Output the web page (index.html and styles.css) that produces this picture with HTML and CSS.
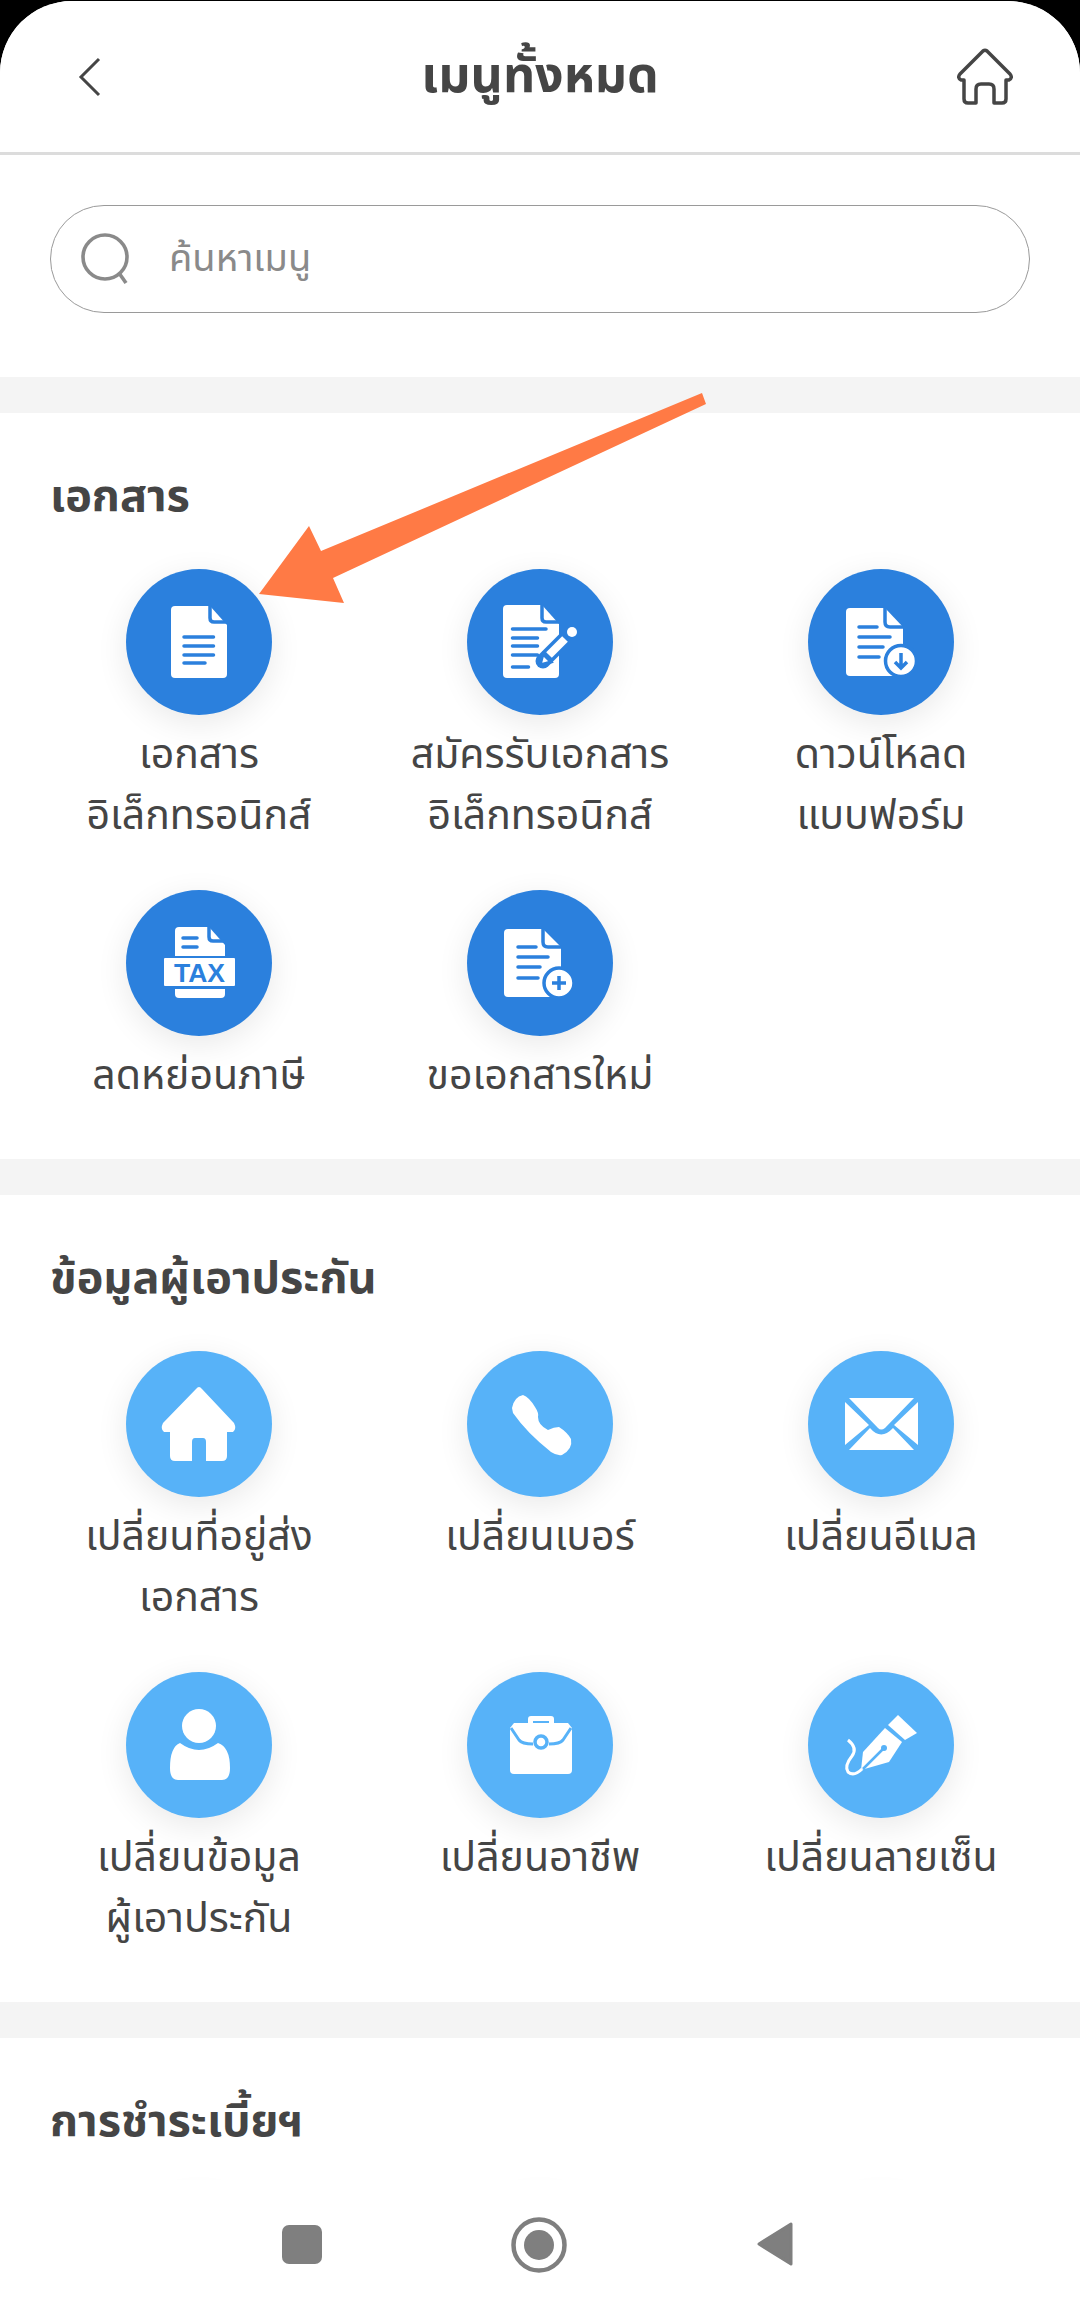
FILE: index.html
```html
<!DOCTYPE html>
<html lang="th">
<head>
<meta charset="utf-8">
<title>เมนูทั้งหมด</title>
<link rel="stylesheet" href="styles.css">
</head>
<body>
<div class="screen">
  <header class="topbar">
    <svg class="back" viewBox="0 0 24 40" width="24" height="40"><path d="M21 2 3 20l18 18" fill="none" stroke="#454545" stroke-width="3"/></svg>
    <h1 class="title">เมนูทั้งหมด</h1>
    <svg class="home" viewBox="0 0 56 57" width="56" height="57"><path d="M26 3Q28 1.500 30 3L53 26Q56 30 52 32H49V51Q49 55 45 55H37V41Q37 36 32 36H24Q19 36 19 41V55H11Q7 55 7 51V32H4Q0 30 3 26Z" fill="none" stroke="#454545" stroke-width="3.500" stroke-linejoin="round"/></svg>
  </header>
  <div class="searchwrap">
    <div class="search">
      <svg class="lens" viewBox="0 0 52 52" width="52" height="52"><circle cx="24" cy="24" r="22" fill="none" stroke="#8a8a8a" stroke-width="3.600"/><path d="m38 40 7 10" stroke="#8a8a8a" stroke-width="3.600" fill="none"/></svg>
      <span class="placeholder">ค้นหาเมนู</span>
    </div>
  </div>
  <section class="section s1">
    <h2 class="heading">เอกสาร</h2>
    <div class="grid">
      <div class="item"><div class="circle dark"><svg viewBox="0 0 146 146"><path d="M45 41q0-4 4-4h35l17 19v49q0 4-4 4H49q-4 0-4-4Z" fill="#fff"/><path d="M84 36v13q0 4 4 4h14" class="ln"/><path d="M58 68h29.500M58 77h29.500M58 86h29.500M58 94h21" class="ln rnd"/></svg></div><p class="label">เอกสาร<br>อิเล็กทรอนิกส์</p></div>
      <div class="item"><div class="circle dark"><svg viewBox="0 0 146 146"><path d="M36 40q0-4 4-4h35l17 19v50q0 4-4 4H40q-4 0-4-4Z" fill="#fff"/><path d="M75 35v14q0 4 4 4h14" class="ln"/><path d="M45.500 60h33.500M45.500 69h25M45.500 77h25M45.500 86h25M45.500 98h16" class="ln rnd"/><path d="M76 92 105 63" stroke="#2b80dd" stroke-width="15" stroke-linecap="round" fill="none"/><path d="M82 86 98 70" stroke="#fff" stroke-width="8" fill="none"/><circle cx="105" cy="63" r="5" fill="#fff"/><path d="M73 96l3-11 8 8Z" fill="#fff" stroke="#2b80dd" stroke-width="3"/></svg></div><p class="label">สมัครรับเอกสาร<br>อิเล็กทรอนิกส์</p></div>
      <div class="item"><div class="circle dark"><svg viewBox="0 0 146 146"><path d="M38 43q0-4 4-4h35l18 19v49H42q-4 0-4-4Z" fill="#fff"/><path d="M77 38v15q0 5 5 5h14" class="ln"/><path d="M51 58h18M51 68h31M51 78h24M51 88h20" class="ln rnd"/><circle cx="93" cy="92" r="15.500" fill="#fff" stroke="#2b80dd" stroke-width="3.500"/><path d="M93 84v14m-6-5 6 6 6-6" class="ln"/></svg></div><p class="label">ดาวน์โหลด<br>แบบฟอร์ม</p></div>
      <div class="item"><div class="circle dark"><svg viewBox="0 0 146 146"><path d="M49 41q0-4 4-4h30l16 18v11H49Z" fill="#fff"/><path d="M83 36v11q0 4 4 4h13" class="ln"/><path d="M57 48h14M57 57h14" class="ln rnd"/><rect x="38" y="68" width="71" height="28" rx="1" fill="#fff"/><path d="M49 99h50v5q0 4-4 4H53q-4 0-4-4Z" fill="#fff"/><text x="73.500" y="92" class="taxtext">TAX</text></svg></div><p class="label">ลดหย่อนภาษี</p></div>
      <div class="item"><div class="circle dark"><svg viewBox="0 0 146 146"><path d="M37 43q0-4 4-4h35l18 18v50H41q-4 0-4-4Z" fill="#fff"/><path d="M76 38v14q0 5 5 5h14" class="ln"/><path d="M51 57h18M51 67h30M51 77h22M51 88h20" class="ln rnd"/><circle cx="92" cy="93" r="15" fill="#fff" stroke="#2b80dd" stroke-width="3.500"/><path d="M92 86v14m-7-7h14" class="ln"/></svg></div><p class="label">ขอเอกสารใหม่</p></div>
    </div>
  </section>
  <section class="section s2">
    <h2 class="heading">ข้อมูลผู้เอาประกัน</h2>
    <div class="grid">
      <div class="item"><div class="circle light"><svg viewBox="0 0 146 146"><path d="M70 38q3-4 6 0l32 34q3 6-1 9h-6v24q0 5-5 5H80V91q0-4-3-4h-8q-3 0-3 4v19H49q-5 0-5-5V81h-6q-4-3-1-9Z" fill="#fff"/></svg></div><p class="label">เปลี่ยนที่อยู่ส่ง<br>เอกสาร</p></div>
      <div class="item"><div class="circle light"><svg viewBox="0 0 146 146"><path d="M45 57Q47 46 56 44 62 46 68 56 72 62 71 66 71 74 81 79 87 76 92 76 100 81 104 88 106 98 95 104 90 105 84 101 60 82 46 62Z" fill="#fff"/></svg></div><p class="label">เปลี่ยนเบอร์</p></div>
      <div class="item"><div class="circle light"><svg viewBox="0 0 146 146"><path d="M41 47H106L77 77Q73 80 70 77ZM37 51 61 74 37 94ZM110 51 86 74 110 94ZM41 99 62 77Q73 90 85 77L106 99Z" fill="#fff"/></svg></div><p class="label">เปลี่ยนอีเมล</p></div>
      <div class="item"><div class="circle light"><svg viewBox="0 0 146 146"><circle cx="73" cy="54" r="17" fill="#fff"/><path d="M54 71Q73 85 92 71 104 75 104 96 104 108 96 108H52Q44 108 44 96 44 75 54 71Z" fill="#fff"/></svg></div><p class="label">เปลี่ยนข้อมูล<br>ผู้เอาประกัน</p></div>
      <div class="item"><div class="circle light"><svg viewBox="0 0 146 146"><path d="M61 51v-4q0-3 3-3h20q3 0 3 3v4h-5v-2H66v2Z" fill="#fff"/><path d="M47 51h54l4 5v42q0 4-4 4H47q-4 0-4-4V56Z" fill="#fff"/><path d="M44 56 52 68Q55 72 66 72M82 72Q93 72 96 68L104 56" fill="none" stroke="#57b2f8" stroke-width="3"/><circle cx="74" cy="70" r="6" fill="#fff" stroke="#57b2f8" stroke-width="3.500"/></svg></div><p class="label">เปลี่ยนอาชีพ</p></div>
      <div class="item"><div class="circle light"><svg viewBox="0 0 146 146"><path d="M90 43 109 61 97 68 80 53Z" fill="#fff"/><path d="M77 56 94 70 81 90 53 98 55 80Z" fill="#fff"/><path d="M55 97 75 77" stroke="#57b2f8" stroke-width="2.500" fill="none"/><circle cx="76" cy="76" r="3" fill="#57b2f8"/><path d="M40 68Q50 76 44 84 36 94 40 100 46 105 54 97" fill="none" stroke="#fff" stroke-width="3"/></svg></div><p class="label">เปลี่ยนลายเซ็น</p></div>
    </div>
  </section>
  <section class="section s3">
    <h2 class="heading">การชำระเบี้ยฯ</h2>
    <div class="grid">
      <div class="item"><div class="circle light"></div></div>
      <div class="item"><div class="circle light"></div></div>
      <div class="item"><div class="circle light"></div></div>
    </div>
  </section>
  <nav class="navbar">
    <span class="nav-square"></span>
    <svg class="nav-home" viewBox="0 0 56 56" width="56" height="56"><circle cx="28" cy="28" r="25.500" fill="none" stroke="#7f7f7f" stroke-width="4.500"/><circle cx="28" cy="28" r="15" fill="#7f7f7f"/></svg>
    <svg class="nav-back" viewBox="0 0 38 46" width="38" height="46"><path d="M35 3v40L3 23Z" fill="#7f7f7f" stroke="#7f7f7f" stroke-width="3" stroke-linejoin="round"/></svg>
  </nav>
  <svg class="arrow" viewBox="0 0 480 230" width="480" height="230"><path d="M462 13 466 24 93 198 104 223 19 214 69 146 81 171Z" fill="#ff7a45"/></svg>
</div>
</body>
</html>
```

FILE: styles.css
```css
* { box-sizing: border-box; }
html, body { margin: 0; padding: 0; background: #000; }
body { width: 1080px; height: 2310px; overflow: hidden; font-family: "Noto Sans Thai", "Noto Sans", "Open Sans", sans-serif; color: #454545; }
.screen { position: relative; width: 1080px; height: 2309px; margin-top: 1px; background: #f4f4f4; border-radius: 72px 72px 0 0; overflow: hidden; }
.topbar { display: grid; grid-template-columns: 1fr auto 1fr; align-items: center; height: 154px; padding: 0 67px; background: #fff; border-bottom: 3px solid #dcdcdc; }
.back { display: block; margin-left: 11px; }
.title { margin: 0; font-size: 50px; font-weight: 700; line-height: 60px; color: #454545; }
.home { display: block; justify-self: end; }
.searchwrap { height: 222px; padding: 50px 50px 0; background: #fff; }
.search { display: flex; align-items: center; gap: 36px; height: 108px; padding: 0 30px; border: 1.5px solid #9a9a9a; border-radius: 54px; }
.lens { display: block; flex: none; }
.placeholder { font-size: 38px; color: #8a8a8a; }
.section { background: #fff; padding: 0 28.5px; margin-top: 36px; }
.s1 { height: 746px; padding-top: 54px; }
.s2 { height: 807px; padding-top: 54px; }
.s3 { height: 400px; padding-top: 54px; }
.heading { margin: 0 0 0 21.5px; font-size: 45px; font-weight: 700; line-height: 60px; color: #454545; }
.grid { display: grid; grid-template-columns: repeat(3, 341px); margin-top: 42px; row-gap: 43px; }
.item { display: flex; flex-direction: column; align-items: center; }
.circle { width: 146px; height: 146px; border-radius: 50%; box-shadow: 0 8px 32px rgba(0,0,0,.09); }
.circle svg { display: block; width: 146px; height: 146px; }
.dark { background: #2b80dd; }
.light { background: #57b2f8; }
.label { margin: 10px 0 0; font-size: 41px; line-height: 61px; text-align: center; color: #454545; }
.ln { fill: none; stroke: #2b80dd; stroke-width: 3.5px; }
.rnd { stroke-linecap: round; }
.taxtext { font: 700 26.5px "Liberation Sans", sans-serif; fill: #2b80dd; text-anchor: middle; }
.navbar { position: absolute; left: 0; right: 0; bottom: 0; height: 130px; background: #fff; }
.nav-square { position: absolute; left: 282px; top: 45px; width: 40px; height: 39px; border-radius: 7px; background: #7f7f7f; }
.nav-home { position: absolute; left: 511px; top: 37px; }
.nav-back { position: absolute; left: 756px; top: 41px; }
.arrow { position: absolute; left: 240px; top: 379px; }
```
